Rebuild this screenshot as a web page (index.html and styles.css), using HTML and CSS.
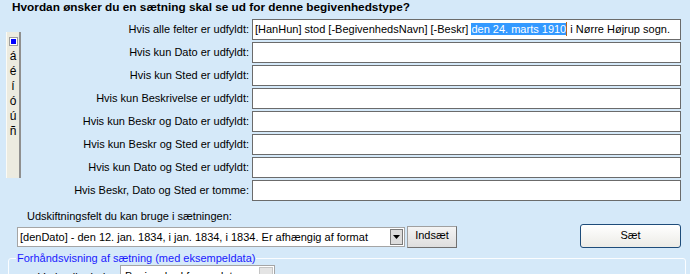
FILE: index.html
```html
<!DOCTYPE html>
<html lang="da">
  <head>
    <meta charset="UTF-8" />
    <title>Sætningsformat</title>
    <link rel="stylesheet" href="styles.css">
  </head>
  <body>
    <div class="title">Hvordan ønsker du en sætning skal se ud for denne begivenhedstype?</div>

    <div class="main">
      <div class="toolbar">
        <span class="tb-square"></span>
        <span class="tb-char">á</span>
        <span class="tb-char">é</span>
        <span class="tb-char">í</span>
        <span class="tb-char">ó</span>
        <span class="tb-char">ú</span>
        <span class="tb-char">ñ</span>
      </div>

      <div class="fields">
        <label class="field-label">Hvis alle felter er udfyldt:</label>
        <div class="field-input">[HanHun] stod [-BegivenhedsNavn] [-Beskr] <span class="sel">den 24. marts 1910</span><span class="caret"></span> i Nørre Højrup sogn.</div>

        <label class="field-label">Hvis kun Dato er udfyldt:</label>
        <div class="field-input"></div>

        <label class="field-label">Hvis kun Sted er udfyldt:</label>
        <div class="field-input"></div>

        <label class="field-label">Hvis kun Beskrivelse er udfyldt:</label>
        <div class="field-input"></div>

        <label class="field-label">Hvis kun Beskr og Dato er udfyldt:</label>
        <div class="field-input"></div>

        <label class="field-label">Hvis kun Beskr og Sted er udfyldt:</label>
        <div class="field-input"></div>

        <label class="field-label">Hvis kun Dato og Sted er udfyldt:</label>
        <div class="field-input"></div>

        <label class="field-label">Hvis Beskr, Dato og Sted er tomme:</label>
        <div class="field-input"></div>
      </div>
    </div>

    <div class="subst-label">Udskiftningsfelt du kan bruge i sætningen:</div>

    <div class="subst-row">
      <div class="combo">
        <span class="combo-text">[denDato] - den 12. jan. 1834, i jan. 1834, i 1834. Er afhængig af format</span>
        <span class="combo-btn"><svg width="7" height="4" viewBox="0 0 7 4"><path d="M0 0h7L3.5 4z" fill="#000"/></svg></span>
      </div>
      <button class="btn-insert">Indsæt</button>
      <div class="spacer"></div>
      <button class="btn-set">Sæt</button>
    </div>

    <fieldset class="preview">
      <legend>Forhåndsvisning af sætning (med eksempeldata)</legend>
      <div class="preview-row">
        <span class="preview-label">Vælg eller lad:</span>
        <div class="preview-combo">
          <span class="preview-text">Begivenhed fra en dato</span>
          <span class="preview-btn"></span>
        </div>
      </div>
    </fieldset>
  </body>
</html>
```

FILE: styles.css
```css
/* Begivenhedstype - sætningsformat */
body {
  margin: 0;
  padding: 0;
  width: 690px;
  height: 274px;
  overflow: hidden;
  background-color: #d5e9f9;
  font-family: "Liberation Sans", Arial, sans-serif;
  font-size: 11px;
  color: #000;
}

.title {
  height: 19px;
  padding-left: 12px;
  line-height: 15px;
  font-size: 11.8px;
  font-weight: bold;
}

.main {
  display: flex;
  padding-left: 6px;
}

.toolbar {
  width: 12px;
  height: 140px;
  margin-top: 13px;
  padding-top: 6px;
  background-color: #ecebe0;
  border-left: 1px solid #fbfbf6;
  border-right: 2px solid #8f8f8f;
  display: flex;
  flex-direction: column;
  align-items: center;
}

.tb-square {
  width: 5px;
  height: 5px;
  background-color: #0000ff;
  border: 1px solid #fff;
  outline: 1px solid #9c9c9c;
  margin-bottom: 4px;
}

.tb-char {
  height: 15px;
  line-height: 15px;
  font-size: 12px;
}

.fields {
  display: grid;
  grid-template-columns: 228px 429px;
  column-gap: 3px;
  row-gap: 2px;
}

.field-label {
  text-align: right;
  line-height: 21px;
  white-space: nowrap;
}

.field-input {
  height: 19px;
  line-height: 19px;
  padding-left: 2px;
  background-color: #fff;
  border: 1px solid #6b6b6b;
  white-space: nowrap;
  overflow: hidden;
}

.sel {
  background-color: #3399ff;
  color: #fff;
}

.caret {
  display: inline-block;
  width: 1px;
  height: 14px;
  vertical-align: -3px;
  background-color: #b5651d;
}

.subst-label {
  margin-top: 8px;
  padding-left: 27px;
  line-height: 15px;
}

.subst-row {
  display: flex;
  align-items: flex-end;
  padding-left: 17px;
  padding-right: 9px;
}

.combo {
  display: flex;
  width: 386px;
  height: 18px;
  margin-bottom: 1px;
  background-color: #fff;
  border: 1px solid #a5a5a5;
}

.combo-text {
  flex: 1;
  padding-left: 2px;
  line-height: 18px;
  white-space: nowrap;
  overflow: hidden;
}

.combo-btn {
  width: 13px;
  margin: 1px;
  display: flex;
  align-items: center;
  justify-content: center;
  background-color: #dcdcdc;
  border: 1px solid #7a7a7a;
  box-sizing: border-box;
}

.btn-insert {
  width: 50px;
  height: 22px;
  margin-left: 2px;
  padding: 0 0 4px;
  font-family: "Liberation Sans", Arial, sans-serif;
  font-size: 11px;
  background: linear-gradient(#f4f4f4, #dedede);
  border: 1px solid #a0a0a0;
  border-right-color: #707070;
  border-bottom-color: #707070;
}

.spacer {
  flex: 1;
}

.btn-set {
  width: 101px;
  height: 24px;
  padding: 0 0 2px;
  font-family: "Liberation Sans", Arial, sans-serif;
  font-size: 11px;
  background: linear-gradient(#ffffff, #ecebe6);
  border: 1px solid #1e4c7a;
  border-radius: 3px;
}

.preview {
  margin: 3px 4px 0 8px;
  padding: 0 0 0 7px;
  border: 1px solid #fbfdff;
  border-radius: 3px;
}

.preview legend {
  padding: 0 1px;
  color: #1a1aff;
  line-height: 14px;
}

.preview-row {
  display: flex;
  align-items: flex-start;
  gap: 8px;
  padding-left: 22px;
}

.preview-label {
  width: 74px;
  line-height: 16px;
  margin-top: 4px;
  white-space: nowrap;
}

.preview-combo {
  display: flex;
  width: 153px;
  height: 20px;
  background-color: #fff;
  border: 1px solid #a5a5a5;
}

.preview-text {
  flex: 1;
  padding-left: 4px;
  line-height: 20px;
  white-space: nowrap;
}

.preview-btn {
  width: 12px;
  margin: 1px;
  background-color: #e4e4e4;
  border: 1px solid #c4c4c4;
}
```
